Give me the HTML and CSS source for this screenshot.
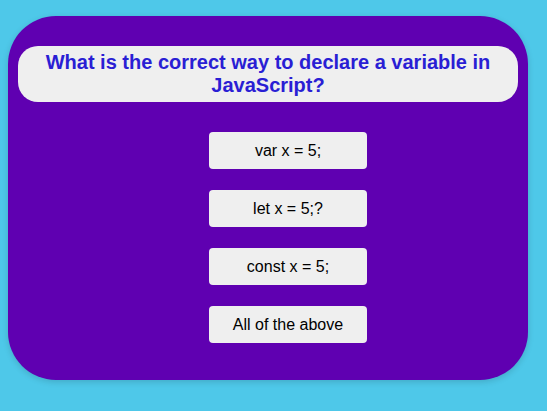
FILE: index.html
```html
<!DOCTYPE html>
<html>
<head>
<meta charset="utf-8">
<link rel="stylesheet" href="styles.css">
</head>
<body>
<div class="card">
  <h2 class="question">What is the correct way to declare a variable in JavaScript?</h2>
  <div class="options">
    <button class="option">var x = 5;</button>
    <button class="option">let x = 5;?</button>
    <button class="option">const x = 5;</button>
    <button class="option">All of the above</button>
  </div>
</div>
</body>
</html>
```
FILE: styles.css
```css
html, body {
  margin: 0;
  padding: 0;
}
body {
  background: #4ec8e9;
  font-family: "Liberation Sans", Arial, sans-serif;
  padding: 16px 8px;
  height: 411px;
  box-sizing: border-box;
}
.card {
  width: 520px;
  height: 364px;
  box-sizing: border-box;
  background: #5f00b1;
  border-radius: 48px;
  padding: 30px 10px 0;
  box-shadow: 0 2px 6px rgba(0, 0, 0, 0.15);
}
.question {
  margin: 0;
  background: #efefef;
  border-radius: 20px;
  color: #2a1ed4;
  font-size: 20px;
  line-height: 23px;
  font-weight: bold;
  text-align: center;
  padding: 5px 10px;
}
.options {
  display: flex;
  flex-direction: column;
  align-items: center;
  gap: 21px;
  margin-top: 30px;
  padding-left: 40px;
}
.option {
  width: 158px;
  height: 37px;
  border: none;
  border-radius: 4px;
  background: #efefef;
  color: #000;
  font-family: "Liberation Sans", Arial, sans-serif;
  font-size: 16px;
  padding: 0;
}
```
